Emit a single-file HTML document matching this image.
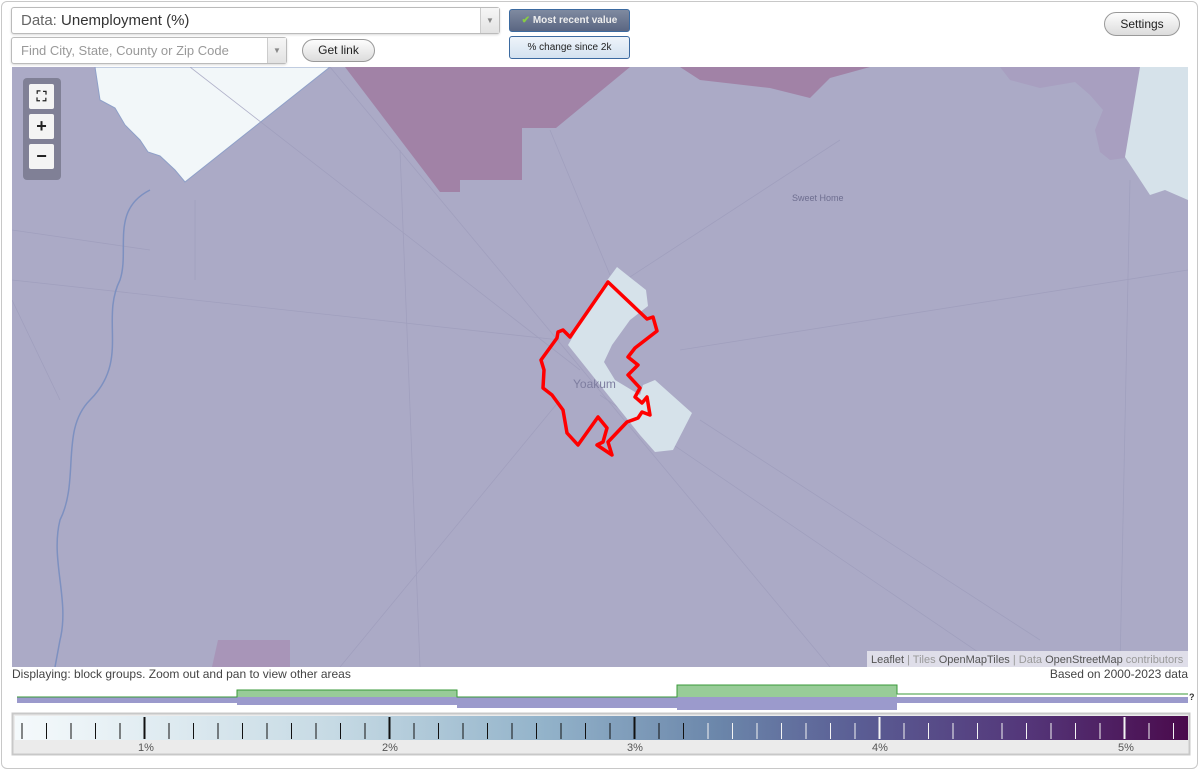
<!DOCTYPE html>
<html><head><meta charset="utf-8"><style>
body{margin:0;width:1200px;height:771px;background:#fff;font-family:"Liberation Sans",sans-serif;position:relative;overflow:hidden}
.frame{position:absolute;left:1px;top:1px;width:1195px;height:766px;border:1px solid #c8c8c8;border-radius:6px}
.sel{position:absolute;background:#fff;border:1px solid #bbb;border-radius:3px;box-shadow:0 1px 2px rgba(0,0,0,.15)}
.arr{position:absolute;right:0;top:0;bottom:0;width:18px;border-left:1px solid #ccc;background:linear-gradient(#f6f6f6,#e2e2e2);font-size:8px;color:#888;text-align:center}
.btn{position:absolute;border:1px solid #999;border-radius:12px;background:linear-gradient(#fdfdfd,#dcdcdc);font-size:12px;color:#222;text-align:center}
.tb{position:absolute;border:1px solid #3b6aa0;border-radius:3px;font-size:10px;text-align:center}
.zc{position:absolute;left:23px;top:78px;width:38px;height:102px;background:rgba(110,110,130,.7);border-radius:4px}
.zb{position:absolute;left:6px;width:25px;height:25px;background:#f4f4f4;border-radius:2px;text-align:center;font-weight:bold;font-size:18px;line-height:24px;color:#222}
</style></head><body>
<div class="frame"></div>
<div class="sel" style="left:11px;top:7px;width:487px;height:25px"><span style="position:absolute;left:9px;top:4px;font-size:15px;color:#666">Data: <span style="color:#333">Unemployment (%)</span></span><div class="arr" style="line-height:25px">▼</div></div>
<div class="sel" style="left:11px;top:37px;width:274px;height:25px"><span style="position:absolute;left:9px;top:5px;font-size:13px;color:#999">Find City, State, County or Zip Code</span><div class="arr" style="line-height:25px">▼</div></div>
<div class="btn" style="left:302px;top:39px;width:71px;height:21px;line-height:21px">Get link</div>
<div class="tb" style="left:509px;top:9px;width:119px;height:21px;line-height:21px;background:linear-gradient(#7f8aa0,#5a6682);color:#eee;font-weight:bold"><span style="color:#8c4">✔</span> Most recent value</div>
<div class="tb" style="left:509px;top:36px;width:119px;height:21px;line-height:21px;background:linear-gradient(#eef4fa,#d3e2f0);color:#222">% change since 2k</div>
<div class="btn" style="left:1104px;top:12px;width:74px;height:22px;line-height:22px">Settings</div>

<svg style="position:absolute;left:0;top:0" width="1200" height="771">
<defs><clipPath id="c"><rect x="12" y="67" width="1176" height="600"/></clipPath>
<linearGradient id="g" x1="0" x2="1"><stop offset="0" stop-color="#f5fafc"/><stop offset=".27" stop-color="#c6dae4"/><stop offset=".45" stop-color="#93b3ca"/><stop offset=".6" stop-color="#6b86aa"/><stop offset=".72" stop-color="#5a5d94"/><stop offset=".86" stop-color="#54377a"/><stop offset="1" stop-color="#4a0a4c"/></linearGradient></defs>
<g clip-path="url(#c)">
<rect x="12" y="67" width="1176" height="600" fill="#abaac6"/>
<polygon points="95,67 100,100 115,108 125,125 140,140 148,152 160,156 175,170 185,182 330,67" fill="#f2f7f9" stroke="#8fa0c8"/>
<polygon points="345,67 440,192 460,192 460,180 522,180 522,128 556,128 590,100 630,67" fill="#a182a6"/>
<polygon points="680,67 700,80 770,88 810,98 830,78 870,67" fill="#a182a6"/>
<polygon points="1000,67 1140,67 1125,158 1110,160 1100,152 1095,130 1103,110 1090,95 1075,82 1040,88 1010,80" fill="#a89fc0"/>
<polygon points="1140,67 1188,67 1188,200 1165,190 1150,195 1125,157" fill="#d6e2ea"/>
<polygon points="212,667 218,640 290,640 290,667" fill="#a895b8"/>
<g stroke="#9e9dbc" stroke-width="0.8" fill="none" opacity=".8">
<line x1="190" y1="67" x2="580" y2="370"/><line x1="600" y1="395" x2="1000" y2="667"/>
<line x1="330" y1="67" x2="830" y2="667"/><line x1="550" y1="130" x2="610" y2="275"/>
<line x1="12" y1="280" x2="560" y2="340"/><line x1="840" y1="140" x2="610" y2="290"/>
<line x1="560" y1="400" x2="340" y2="667"/><line x1="1188" y1="270" x2="680" y2="350"/>
<path d="M195,280 L195,200 M12,230 L150,250 M1130,180 L1120,667 M700,420 L1040,640" />
<path d="M12,300 L60,400 M400,150 L420,667" />
</g>
<path d="M150,190 C110,210 130,250 120,280 C100,320 130,360 90,400 C60,430 80,480 60,520 C50,560 70,600 60,640 L55,667" stroke="#7d90c0" stroke-width="1.5" fill="none"/>
<polygon points="617,267 646,290 648,306 630,320 612,345 604,362 615,380 640,395 643,385 655,380 692,413 673,450 655,452 640,435 568,345 600,290" fill="#d6e2ea"/>
<polygon points="608,282 647,319 653,317 657,331 635,348 628,357 638,365 628,375 640,388 635,397 642,403 647,397 650,415 642,412 638,418 627,422 608,442 612,455 597,445 603,442 607,428 598,417 578,445 567,433 563,410 552,395 543,388 544,370 541,360 557,338 558,332 563,330 570,337" fill="none" stroke="#f00" stroke-width="3.5" stroke-linejoin="round"/>
<text x="573" y="388" font-size="12" fill="#7e7ea0" font-family="Liberation Sans">Yoakum</text>
<text x="792" y="201" font-size="9" fill="#6e6e90" font-family="Liberation Sans">Sweet Home</text>
</g>
<rect x="867" y="651" width="321" height="16" fill="#e8e8ee" opacity=".85"/>
<text x="871" y="663" font-size="11" fill="#999" font-family="Liberation Sans"><tspan fill="#555">Leaflet</tspan> | Tiles <tspan fill="#555">OpenMapTiles</tspan> | Data <tspan fill="#555">OpenStreetMap</tspan> contributors</text>
<rect x="17" y="697" width="1171" height="6" fill="#9b9acc"/>
<rect x="237" y="697" width="220" height="8" fill="#9b9acc"/>
<rect x="457" y="697" width="220" height="11" fill="#9b9acc"/>
<rect x="677" y="697" width="220" height="13" fill="#9b9acc"/>
<rect x="237" y="690" width="220" height="7" fill="#98cc98"/>
<rect x="677" y="685" width="220" height="12" fill="#98cc98"/>
<path d="M17,697 H237 V690 H457 V697 H677 V685 H897 V694 H1188" stroke="#3a9a3a" fill="none"/>
<text x="1189" y="700" font-size="9" font-weight="bold" fill="#333">?</text>
<rect x="12.5" y="713.5" width="1177" height="41" fill="#ebebeb" stroke="#c8c8c8" stroke-width="2"/>
<rect x="15" y="716" width="1173" height="24" fill="url(#g)"/>
<g id="t"></g>
<g font-size="11" fill="#555" font-family="Liberation Sans" text-anchor="middle">
<text x="146" y="751">1%</text><text x="390" y="751">2%</text><text x="635" y="751">3%</text><text x="880" y="751">4%</text><text x="1126" y="751">5%</text></g>
</svg>
<script>
var g=document.getElementById('t'),s='';
for(var i=0;i<48;i++){var x=22+i*24.5;if(x>1186)break;var maj=Math.abs((x-146)%245)<3||Math.abs((x-146)%245-245)<3;var c=x<700?'#111':'#f4f4f4';
s+='<line x1="'+x+'" x2="'+x+'" y1="'+(maj?717:723)+'" y2="739" stroke="'+c+'" stroke-width="'+(maj?2:1)+'"/>';}
g.innerHTML=s;
</script>
<div style="position:absolute;left:12px;top:667px;font-size:12px;color:#444">Displaying: block groups. Zoom out and pan to view other areas</div>
<div style="position:absolute;right:12px;top:667px;font-size:12px;color:#444">Based on 2000-2023 data</div>
<div class="zc"><div class="zb" style="top:6px;font-size:14px">⛶</div><div class="zb" style="top:36px">+</div><div class="zb" style="top:66px">−</div></div>
</body></html>
